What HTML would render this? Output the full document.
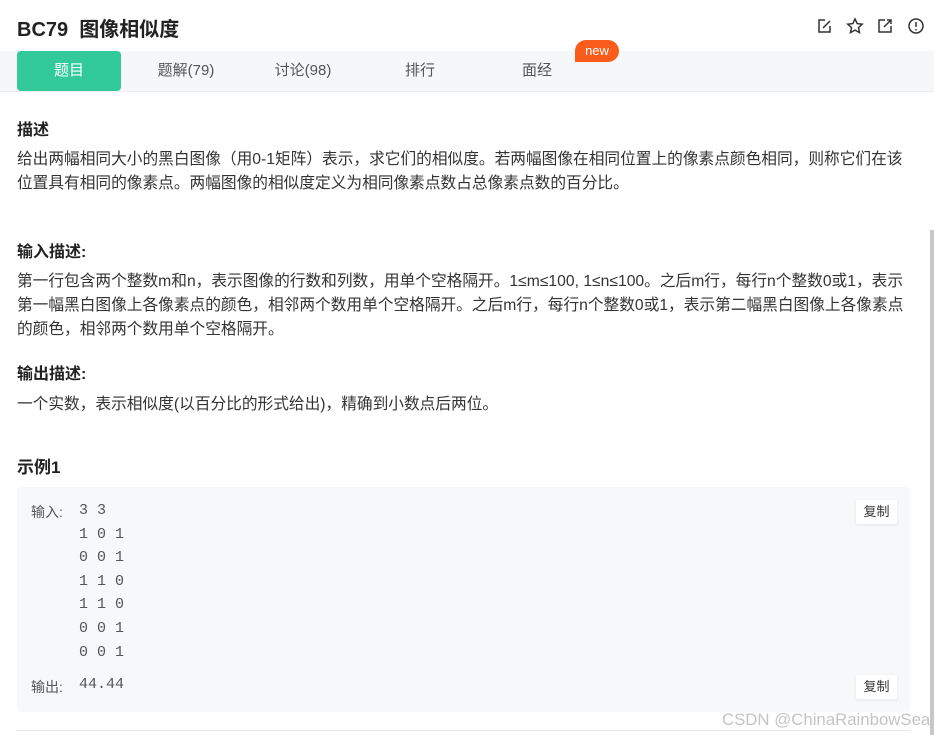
<!DOCTYPE html><html><head><meta charset="utf-8"><style>
body{margin:0;width:934px;height:735px;overflow:hidden;background:#fff;font-family:"Liberation Sans","Noto Sans CJK SC",sans-serif;color:#333;position:relative}
.a{position:absolute}
h1{position:absolute;left:17px;top:13px;margin:0;font-size:20px;font-weight:bold;color:#222}
.tabs{position:absolute;left:0;top:51px;width:934px;height:40px;background:#f6f7f9;border-bottom:1px solid #eceef0}
.tab{position:absolute;top:0;height:40px;line-height:40px;width:104px;text-align:center;font-size:15px;color:#555}
.act{background:#32ca99;color:#fff;border-radius:4px}
.h{position:absolute;left:17px;font-size:16px;font-weight:bold;color:#222}
.p{position:absolute;left:17px;font-size:15.7px;line-height:24px;color:#333;white-space:nowrap}
.box{position:absolute;left:17px;top:487px;width:893px;height:225px;background:#f7f8fa;border-radius:4px}
.mono{font-family:"Liberation Mono",monospace;font-size:15px;color:#555}
.cp{position:absolute;left:856px;width:41px;height:24px;background:#fff;font-size:13px;line-height:24px;text-align:center;color:#333;border-radius:2px;box-shadow:0 1px 3px rgba(0,0,0,.08)}
</style></head><body>
<h1>BC79&nbsp; 图像相似度</h1>
<svg class="a" style="left:815px;top:17px" width="110" height="18" viewBox="0 0 110 18" fill="none" stroke="#333" stroke-width="1.5">
<path d="M10 3H4v12h11V9M8 11l7-7"/>
<path d="M40 2l2.2 4.6 5 .6-3.7 3.4 1 5-4.5-2.5-4.5 2.5 1-5-3.7-3.4 5-.6z"/>
<path d="M70 3h-6v12h12V9M72 3h4v4M76 3l-7 7"/>
<circle cx="101" cy="9" r="7"/><path d="M101 5v5M101 12v1.5"/>
</svg>
<div class="tabs">
<div class="tab act" style="left:17px">题目</div>
<div class="tab" style="left:134px">题解(79)</div>
<div class="tab" style="left:251px">讨论(98)</div>
<div class="tab" style="left:368px">排行</div>
<div class="tab" style="left:485px">面经</div>
</div>
<div class="a" style="left:575px;top:40px;width:44px;height:22px;background:#fa5c1c;border-radius:11px 11px 11px 0;color:#fff;font-size:13px;line-height:21px;text-align:center">new</div>
<div class="h" style="top:116px">描述</div>
<div class="p" style="top:148px">给出两幅相同大小的黑白图像（用0-1矩阵）表示，求它们的相似度。若两幅图像在相同位置上的像素点颜色相同，则称它们在该<br>位置具有相同的像素点。两幅图像的相似度定义为相同像素点数占总像素点数的百分比。</div>
<div class="h" style="top:238px">输入描述:</div>
<div class="p" style="top:270px">第一行包含两个整数m和n，表示图像的行数和列数，用单个空格隔开。1≤m≤100, 1≤n≤100。之后m行，每行n个整数0或1，表示<br>第一幅黑白图像上各像素点的颜色，相邻两个数用单个空格隔开。之后m行，每行n个整数0或1，表示第二幅黑白图像上各像素点<br>的颜色，相邻两个数用单个空格隔开。</div>
<div class="h" style="top:360px">输出描述:</div>
<div class="p" style="top:393px">一个实数，表示相似度(以百分比的形式给出)，精确到小数点后两位。</div>
<div class="h" style="top:453px;font-size:17px">示例1</div>
<div class="box"></div>
<div class="a" style="left:31px;top:502px;font-size:14px;color:#555">输入:</div>
<div class="a mono" style="left:79px;top:499px;line-height:23.6px;white-space:pre">3 3
1 0 1
0 0 1
1 1 0
1 1 0
0 0 1
0 0 1</div>
<div class="a" style="left:31px;top:677px;font-size:14px;color:#555">输出:</div>
<div class="a mono" style="left:79px;top:676px">44.44</div>
<div class="cp" style="top:500px">复制</div>
<div class="cp" style="top:675px">复制</div>
<div class="a" style="left:17px;top:730px;width:893px;height:1px;background:#e8e8e8"></div>
<div class="a" style="left:722px;top:710px;font-size:16.8px;color:#c4c4c4;white-space:nowrap">CSDN @ChinaRainbowSea</div>
<div class="a" style="left:930px;top:230px;width:4px;height:505px;background:#c8c8c8"></div>
</body></html>
